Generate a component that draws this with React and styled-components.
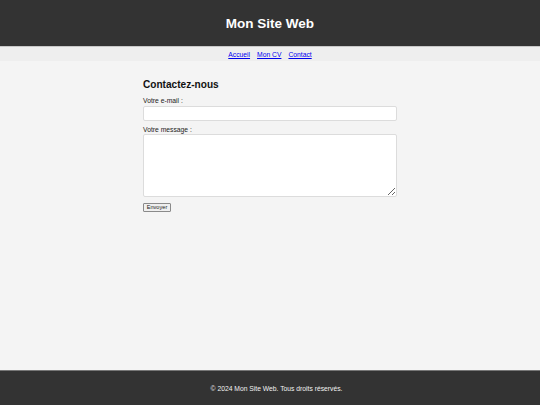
import React from "react";
import styled, { createGlobalStyle } from "styled-components";

const GlobalStyle = createGlobalStyle`
  html, body {
    margin: 0;
    padding: 0;
    background: #f4f4f4;
    font-family: "Liberation Sans", Arial, sans-serif;
    color: #333;
  }
`;

const Page = styled.div`
  min-height: 100vh;
  display: flex;
  flex-direction: column;
`;

const Header = styled.header`
  background: #333;
  color: #fff;
  height: 47px;
  display: flex;
  align-items: center;
  justify-content: center;
  border-bottom: 1px solid #c8c8c8;
  box-sizing: border-box;
  h1 {
    margin: 0;
    font-size: 13.5px;
    font-weight: bold;
  }
`;

const Nav = styled.nav`
  background: #eee;
  height: 14px;
  display: flex;
  align-items: center;
  justify-content: center;
  gap: 7px;
  a {
    color: #0000ee;
    font-size: 6.75px;
    text-decoration: underline;
  }
`;

const Main = styled.main`
  flex: 1;
  display: flex;
  justify-content: center;
  padding-top: 18px;
`;

const Form = styled.form`
  width: 254px;
  display: flex;
  flex-direction: column;
  h2 {
    margin: 0 0 7px;
    font-size: 10.1px;
    color: #111;
  }
`;

const Label = styled.label`
  display: block;
  font-size: 6.75px;
  line-height: 8px;
  color: #222;
`;

const fieldStyles = `
  display: block;
  width: 100%;
  box-sizing: border-box;
  border: 1px solid #dcdcdc;
  border-radius: 2px;
  background: #fff;
  font-family: "Liberation Sans", Arial, sans-serif;
  font-size: 6.75px;
  padding: 3px;
  outline: none;
`;

const Input = styled.input`
  ${fieldStyles}
  height: 15px;
  margin: 0.5px 0 5px;
`;

const TextArea = styled.textarea`
  ${fieldStyles}
  height: 63px;
  margin: 0 0 6.5px;
`;

const Button = styled.button`
  align-self: flex-start;
  font-family: "Liberation Sans", Arial, sans-serif;
  font-size: 5.6px;
  height: 9px;
  width: 28px;
  padding: 0;
  background: #efefef;
  color: #222;
  border: 1px solid #8a8a8a;
  border-radius: 1px;
  line-height: 7px;
`;

const Footer = styled.footer`
  background: #333;
  color: #f2f2f2;
  height: 35px;
  border-top: 1px solid #777;
  box-sizing: border-box;
  display: flex;
  align-items: center;
  justify-content: center;
  padding-left: 13px;
  font-size: 6.75px;
`;

export default function App() {
  return (
    <Page>
      <GlobalStyle />
      <Header>
        <h1>Mon Site Web</h1>
      </Header>
      <Nav>
        <a href="#">Accueil</a>
        <a href="#">Mon CV</a>
        <a href="#">Contact</a>
      </Nav>
      <Main>
        <Form onSubmit={(e) => e.preventDefault()}>
          <h2>Contactez-nous</h2>
          <Label htmlFor="email">Votre e-mail :</Label>
          <Input id="email" type="email" />
          <Label htmlFor="message">Votre message :</Label>
          <TextArea id="message" />
          <Button type="submit">Envoyer</Button>
        </Form>
      </Main>
      <Footer>© 2024 Mon Site Web. Tous droits réservés.</Footer>
    </Page>
  );
}
